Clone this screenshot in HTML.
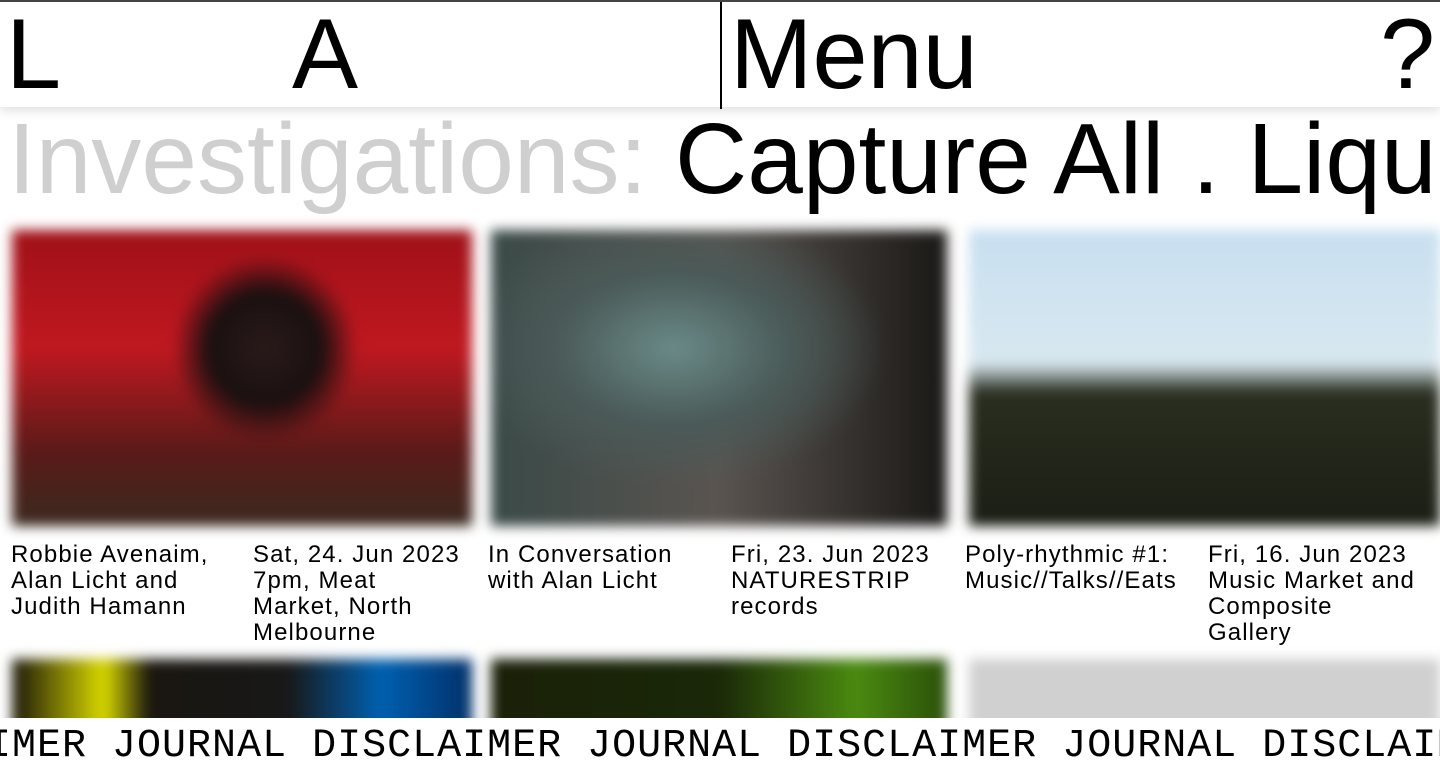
<!DOCTYPE html>
<html><head><meta charset="utf-8"><style>
*{margin:0;padding:0;box-sizing:border-box}
body{width:1440px;height:773px;overflow:hidden;background:#fff;font-family:"Liberation Sans",sans-serif;position:relative}
.hdr{position:absolute;left:0;top:0;width:1440px;height:107px;border-top:2px solid #444;background:#fff;z-index:3;box-shadow:0 4px 10px rgba(0,0,0,.12)}
.hdr span{position:absolute;top:2px;font-size:99px;line-height:100px;color:#000}
.vl{position:absolute;left:720px;top:0;width:2px;height:107px;background:#000}
.tw{position:absolute;left:0;top:104px;width:1440px;height:116px;overflow:hidden;z-index:2}
.title{position:absolute;left:8px;top:0;white-space:nowrap;font-size:100px;line-height:110px;letter-spacing:0px;color:#000}
.title .g{color:#cfcfcf}
.img{position:absolute;filter:blur(6px);overflow:hidden}
.cap{position:absolute;font-size:24px;line-height:26px;color:#000;letter-spacing:1.1px;white-space:nowrap}
.foot{position:absolute;left:0;top:718px;width:1440px;height:55px;background:#fff;z-index:4;overflow:hidden}
.foot div{position:absolute;left:-163px;top:4px;white-space:nowrap;font-family:"Liberation Mono",monospace;font-size:40px;letter-spacing:1px;line-height:50px;color:#000}
</style></head><body>
<div class="hdr"><span style="left:6px">L</span><span style="left:292px">A</span><div class="vl"></div><span style="left:730px">Menu</span><span style="left:1380px">?</span></div>
<div class="tw"><div class="title"><span class="g">Investigations: </span>Capture All . Liquid</div></div>

<div class="img" style="left:12px;top:230px;width:460px;height:296px;background:radial-gradient(circle at 55% 40%,#2a1a1a 0,#1a1010 18%,transparent 30%),linear-gradient(180deg,#a01018 0%,#c01820 40%,#5a1a18 75%,#3a2a20 100%)"></div>
<div class="img" style="left:491px;top:230px;width:456px;height:296px;background:radial-gradient(ellipse at 40% 40%,#6a8a88 0,#4a5a58 30%,transparent 55%),linear-gradient(90deg,#3a4a48,#5a5450 50%,#1a1816)"></div>
<div class="img" style="left:969px;top:230px;width:471px;height:296px;background:linear-gradient(180deg,#c8dff0 0%,#d8e8f0 45%,#2a2e20 55%,#1a1e14 100%)"></div>
<div class="img" style="left:12px;top:659px;width:460px;height:80px;background:linear-gradient(90deg,#1a1608 0,#d8d800 20%,#1a1610 30%,#181818 60%,#0060b0 80%,#02306a 100%)"></div>
<div class="img" style="left:491px;top:659px;width:456px;height:80px;background:linear-gradient(90deg,#1a2008,#1a2808 50%,#4a8a10 80%,#2a5008)"></div>
<div class="img" style="left:969px;top:659px;width:471px;height:80px;background:#d0d0d0"></div>

<div class="cap" style="left:11px;top:542px">Robbie Avenaim,<br>Alan Licht and<br>Judith Hamann</div>
<div class="cap" style="left:253px;top:542px">Sat, 24. Jun 2023<br>7pm, Meat<br>Market, North<br>Melbourne</div>
<div class="cap" style="left:488px;top:542px">In Conversation<br>with Alan Licht</div>
<div class="cap" style="left:731px;top:542px">Fri, 23. Jun 2023<br>NATURESTRIP<br>records</div>
<div class="cap" style="left:965px;top:542px">Poly-rhythmic #1:<br>Music//Talks//Eats</div>
<div class="cap" style="left:1208px;top:542px">Fri, 16. Jun 2023<br>Music Market and<br>Composite<br>Gallery</div>

<div class="foot"><div>DISCLAIMER JOURNAL DISCLAIMER JOURNAL DISCLAIMER JOURNAL DISCLAIMER</div></div>
</body></html>
